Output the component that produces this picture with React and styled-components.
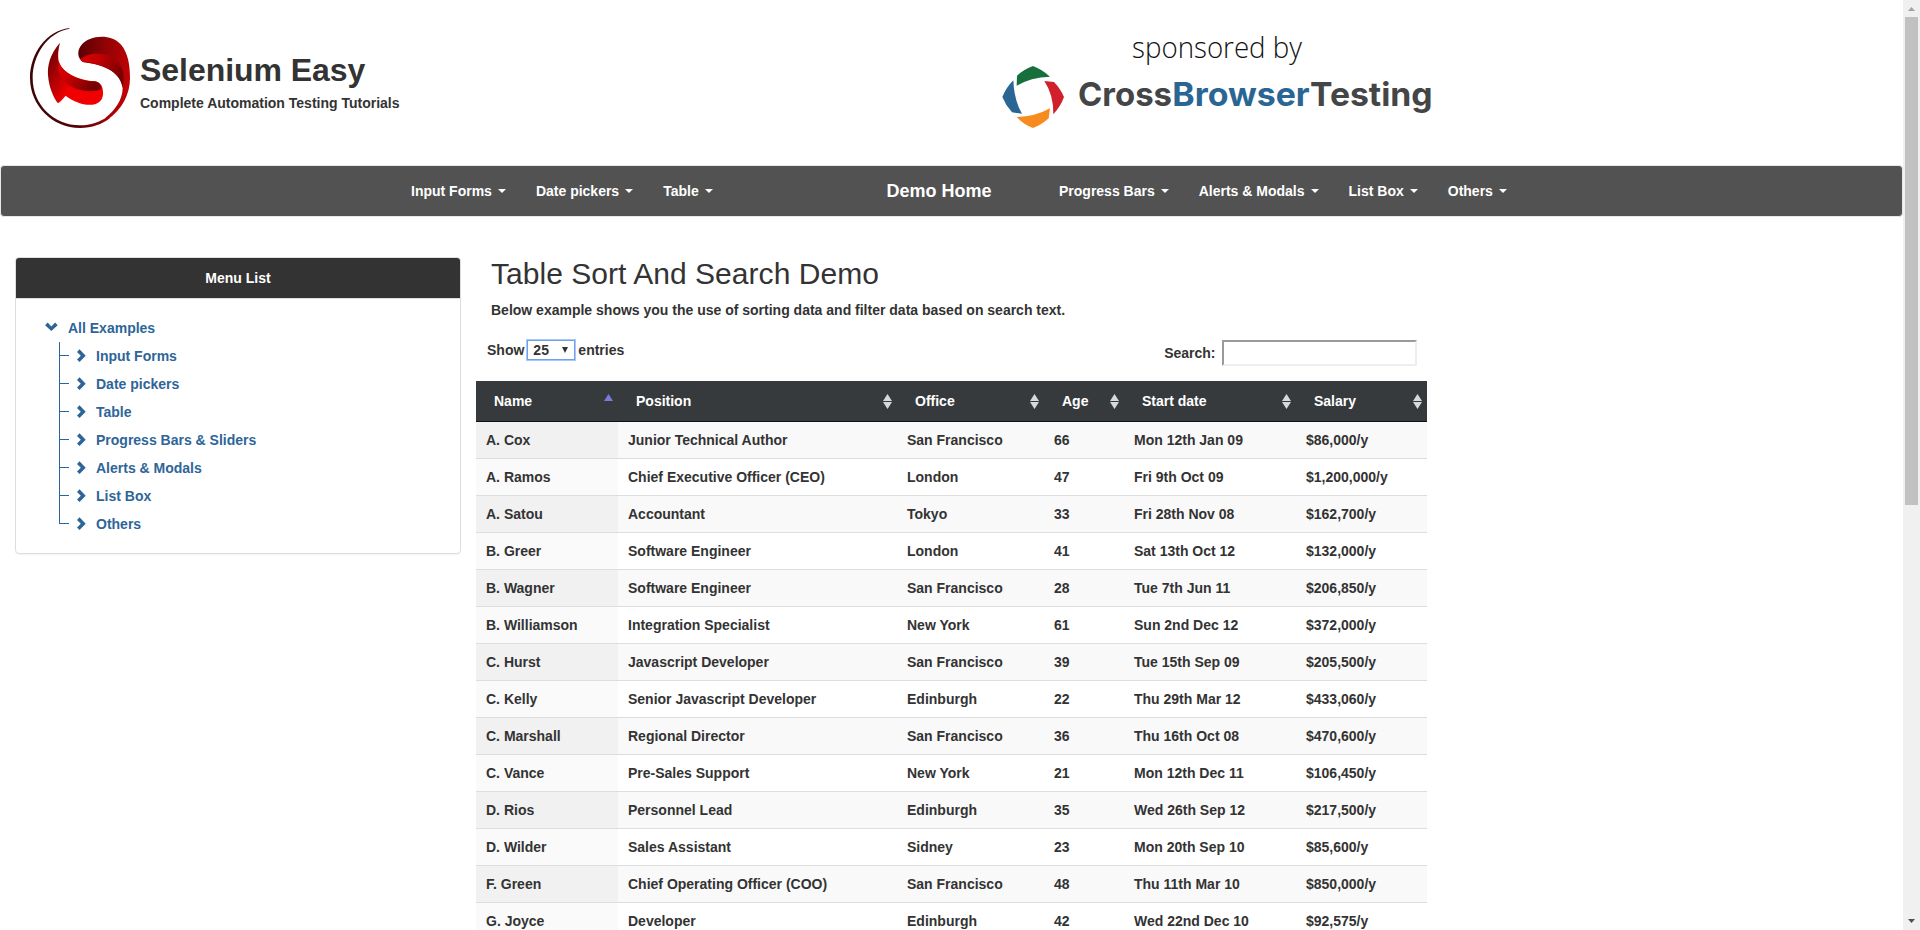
import React from 'react';
import styled, { createGlobalStyle, css } from 'styled-components';

const GlobalStyle = createGlobalStyle`
  *, *::before, *::after { box-sizing: border-box; }
  html, body { margin: 0; height: 930px; overflow: hidden; background: #fff; }
  body {
    font: bold 14px/20px "Liberation Sans", Arial, sans-serif;
    color: #333;
  }
`;

const Shell = styled.div`
  display: grid;
  grid-template-columns: 1903px 17px;
  height: 930px;
  overflow: hidden;
`;

const Page = styled.div`
  height: 930px;
  overflow: hidden;
`;

/* ---------- header ---------- */

const Header = styled.header`
  display: grid;
  grid-template-columns: 972px auto;
  height: 165px;
  padding: 0 0 0 30px;
`;

const Brand = styled.div`
  display: flex;
  align-items: flex-start;
  gap: 10px;
  padding-top: 28px;
`;

const BrandText = styled.div`
  padding-top: 25px;
`;

const BrandName = styled.h1`
  margin: 0 0 5px;
  font-size: 32px;
  line-height: 35px;
  letter-spacing: -0.05px;
`;

const Tagline = styled.div`
  white-space: nowrap;
`;

const Sponsor = styled.div`
  padding-top: 16px;
  svg { display: block; }
`;

/* ---------- navigation ---------- */

const NavBar = styled.nav`
  display: grid;
  grid-template-columns: 475px 173px auto;
  height: 52px;
  padding-left: 395px;
  border: 1px solid #e7e7e7;
  border-radius: 4px;
  background: #525252;
  color: #fff;
`;

const NavGroup = styled.ul`
  display: flex;
  margin: 0;
  padding: 0;
  list-style: none;
`;

const NavItem = styled.li`
  display: flex;
  align-items: center;
  gap: 6px;
  padding: 0 15px;
  white-space: nowrap;
`;

const Caret = styled.span`
  border: 4px solid transparent;
  border-top-color: #fff;
  border-bottom: 0;
`;

const NavHome = styled.a`
  padding: 15px 15px 15px 15.5px;
  font-size: 18px;
`;

/* ---------- body columns ---------- */

const Columns = styled.div`
  display: flex;
  align-items: flex-start;
  padding-top: 40px;
`;

const SideColumn = styled.aside`
  width: 476px;
  padding: 0 15px;
`;

const Panel = styled.section`
  border: 1px solid #ddd;
  border-radius: 4px;
  box-shadow: 0 1px 1px rgba(0, 0, 0, 0.05);
  overflow: hidden;
`;

const PanelHeading = styled.div`
  padding: 10px 15px;
  border-bottom: 1px solid #ddd;
  background: #333;
  color: #fff;
  text-align: center;
`;

const Tree = styled.ul`
  margin: 0;
  padding: 15px 0 15px 28px;
  list-style: none;
  color: #2e6599;
`;

const TreeRow = styled.li`
  display: flex;
  align-items: center;
  height: 28px;
  ${(p) => p.$root ? css`padding-left: 1px; gap: 9px;` : css`padding-left: 15px; gap: 8px;`}
`;

const Branch = styled.span`
  align-self: stretch;
  width: 10px;
  ${(p) => !p.$last && css`border-left: 1px solid #2e6599;`}
  &::before {
    content: '';
    display: block;
    height: 14px;
    border-bottom: 1px solid #2e6599;
    ${(p) => p.$last && css`border-left: 1px solid #2e6599;`}
  }
`;

const TreeLabel = styled.span`
  padding-left: ${(p) => (p.$root ? 0 : 1)}px;
`;

/* ---------- table ---------- */

const MainColumn = styled.main`
  width: 951px;
`;

const Title = styled.h2`
  margin: 0 0 10px 15px;
  font-size: 30px;
  font-weight: 400;
  line-height: 33px;
  letter-spacing: 0.04px;
`;

const Intro = styled.p`
  margin: 0 0 20px 15px;
`;

const Controls = styled.div`
  display: flex;
  justify-content: space-between;
  align-items: flex-start;
  height: 41px;
  padding: 0 10px 0 11px;
`;

const LengthControl = styled.label`
  display: flex;
  gap: 3px;
`;

const LengthSelect = styled.span`
  display: flex;
  align-items: center;
  justify-content: space-between;
  width: 48px;
  height: 20px;
  padding: 0 6px 0 5px;
  border: 1px solid #6f9ff0;
  box-shadow: 0 0 0 1px #a9c7f7;
  background: #fff;
`;

const FilterControl = styled.label`
  display: flex;
  align-items: center;
  gap: 6.5px;
`;

const FilterInput = styled.input`
  width: 195px;
  height: 26px;
  border: 2px solid;
  border-color: #9a9a9a #eee #eee #9a9a9a;
  background: #fff;
`;

const Table = styled.table`
  width: 951px;
  table-layout: fixed;
  border-collapse: separate;
  border-spacing: 0;
`;

const HeadCell = styled.th`
  width: ${(p) => p.$w}px;
  height: 41px;
  padding: 0 5px 0 18px;
  border-bottom: 1px solid #111;
  background: #363a3d;
  color: #fff;
  text-align: left;
`;

const HeadInner = styled.div`
  display: flex;
  align-items: center;
  justify-content: space-between;
`;

const Cell = styled.td`
  padding: 8px 10px;
  border-top: 1px solid #ddd;
  white-space: nowrap;
`;

const Row = styled.tr`
  background: #fff;
  & > td:first-child { background: #fafafa; }
  &:nth-child(odd) { background: #f9f9f9; }
  &:nth-child(odd) > td:first-child { background: #f1f1f1; }
  &:first-child > td { border-top: 0; }
`;

/* ---------- scrollbar ---------- */

const ScrollTrack = styled.div`
  display: flex;
  flex-direction: column;
  align-items: center;
  justify-content: space-between;
  height: 930px;
  background: #f0f0f0;
`;

const ScrollUpper = styled.div`
  display: flex;
  flex-direction: column;
  align-items: center;
`;

const ScrollArrow = styled.svg`
  display: block;
  width: 17px;
  height: 17px;
`;

const ScrollThumb = styled.div`
  width: 13px;
  height: 488px;
  background: #c1c1c1;
`;

const SeleniumLogo = () => (
  <svg width="100" height="100" viewBox="90 84 300 300">
    <defs>
      <linearGradient id="ring" x1="0" y1="0" x2="1" y2="0">
        <stop offset="0" stopColor="#3c0506" />
        <stop offset=".6" stopColor="#560204" />
        <stop offset="1" stopColor="#a50205" />
      </linearGradient>
      <linearGradient id="top" x1="0" y1=".2" x2="1" y2=".45">
        <stop offset="0" stopColor="#5c0002" />
        <stop offset=".5" stopColor="#930306" />
        <stop offset="1" stopColor="#c00206" />
      </linearGradient>
      <linearGradient id="fold" x1="0" y1="0" x2="1" y2=".5">
        <stop offset="0" stopColor="#e00003" />
        <stop offset=".45" stopColor="#bc0003" />
        <stop offset="1" stopColor="#780003" />
      </linearGradient>
      <linearGradient id="low" x1="0" y1="0" x2="1" y2=".6">
        <stop offset="0" stopColor="#5c0002" />
        <stop offset=".38" stopColor="#b50104" />
        <stop offset=".6" stopColor="#f00000" />
        <stop offset="1" stopColor="#f00000" />
      </linearGradient>
      <linearGradient id="lowfold" x1="0" y1="0" x2="1" y2=".5">
        <stop offset="0" stopColor="#e80003" />
        <stop offset=".4" stopColor="#c80003" />
        <stop offset="1" stopColor="#750003" />
      </linearGradient>
    </defs>
    <path fill="url(#ring)" d="M208 84C140 92 90 160 90 234C90 316 157 384 240 384C277 384 306 373 329 355L322 350C300 366 272 376 240 376C162 376 98 315 98 234C98 165 142 98 208 86Z" />
    <path fill="url(#top)" d="M248 186C232 172 230 152 245 134C266 108 330 98 362 133C384 158 390 195 390 234C390 282 366 330 322 359L315 355C346 330 368 298 368 264C364 220 320 195 248 186Z" />
    <path fill="url(#fold)" d="M242 178C262 157 312 155 344 177C362 190 372 212 371 240L368 264C362 222 320 192 248 186Z" />
    <path fill="url(#low)" d="M180 128C150 162 142 196 144 226C147 262 160 293 174 310C183 304 190 294 197 287C220 305 249 316 277 314C300 311 311 296 309 275C308 253 296 244 280 244C229 239 190 218 178 190C171 170 176 144 180 128Z" />
    <path fill="url(#lowfold)" d="M176 183C189 223 238 243 285 244C299 247 305 258 303 268C280 280 225 273 196 248C180 232 173 205 176 183Z" />
  </svg>
);

const SponsorLogo = () => (
  <svg width="440" height="124" viewBox="66 48 1320 372">
    <text x="456" y="173" fontFamily="Open Sans, sans-serif" fontWeight="300" fontSize="86" fill="#111" textLength="510" lengthAdjust="spacingAndGlyphs">sponsored by</text>
    <path fill="#176f3b" d="M159 198Q186 208 210 230Q152 232 110 257L111 227Q133 207 159 198Z" />
    <path fill="#cf202b" d="M193 243L222 246Q242 267 252 291Q242 319 220 343Q221 285 193 243Z" />
    <path fill="#f78b20" d="M210 325L206 355Q186 374 159 384Q131 374 110 351Q166 350 210 325Z" />
    <path fill="#296693" d="M100 241Q102 300 126 341L96 337Q77 316 67 291Q78 263 100 241Z" />
    <g fontFamily="Inter, sans-serif" fontWeight="700" fontSize="100">
      <text x="294" y="318" fill="#444547" textLength="282" lengthAdjust="spacingAndGlyphs">Cross</text>
      <text x="577" y="318" fill="#296693" textLength="412" lengthAdjust="spacingAndGlyphs">Browser</text>
      <text x="990" y="318" fill="#444547" textLength="368" lengthAdjust="spacingAndGlyphs">Testing</text>
    </g>
  </svg>
);

const ChevronDown = () => (
  <svg width="14" height="12" viewBox="0.7 0.8 14 12">
    <path fill="#2e6599" d="M.8 4L3.4 1.4L7 5.2L10.8 1.4L13.4 4L7 9.9Z" />
  </svg>
);

const ChevronRight = () => (
  <svg width="10" height="14" viewBox="0.5 0.3 10 14">
    <path fill="#2e6599" d="M.5 3.2L3 .6L9.2 7L3 13.2L.5 10.8L4.3 7Z" />
  </svg>
);

const SortIcon = ({ active }) => (
  <svg width="9" height="15" viewBox="0 0 9 15">
    <path fill={active ? '#7a7ade' : '#d8d8d8'} d="M4.5 0L9 7H0Z" />
    {!active && <path fill="#d8d8d8" d="M0 8H9L4.5 15Z" />}
  </svg>
);

const leftNav = ['Input Forms', 'Date pickers', 'Table'];
const rightNav = ['Progress Bars', 'Alerts & Modals', 'List Box', 'Others'];
const tree = ['Input Forms', 'Date pickers', 'Table', 'Progress Bars & Sliders', 'Alerts & Modals', 'List Box', 'Others'];

const columns = [
  ['Name', 142],
  ['Position', 279],
  ['Office', 147],
  ['Age', 80],
  ['Start date', 172],
  ['Salary', 131],
];

const rows = [
  ['A. Cox', 'Junior Technical Author', 'San Francisco', '66', 'Mon 12th Jan 09', '$86,000/y'],
  ['A. Ramos', 'Chief Executive Officer (CEO)', 'London', '47', 'Fri 9th Oct 09', '$1,200,000/y'],
  ['A. Satou', 'Accountant', 'Tokyo', '33', 'Fri 28th Nov 08', '$162,700/y'],
  ['B. Greer', 'Software Engineer', 'London', '41', 'Sat 13th Oct 12', '$132,000/y'],
  ['B. Wagner', 'Software Engineer', 'San Francisco', '28', 'Tue 7th Jun 11', '$206,850/y'],
  ['B. Williamson', 'Integration Specialist', 'New York', '61', 'Sun 2nd Dec 12', '$372,000/y'],
  ['C. Hurst', 'Javascript Developer', 'San Francisco', '39', 'Tue 15th Sep 09', '$205,500/y'],
  ['C. Kelly', 'Senior Javascript Developer', 'Edinburgh', '22', 'Thu 29th Mar 12', '$433,060/y'],
  ['C. Marshall', 'Regional Director', 'San Francisco', '36', 'Thu 16th Oct 08', '$470,600/y'],
  ['C. Vance', 'Pre-Sales Support', 'New York', '21', 'Mon 12th Dec 11', '$106,450/y'],
  ['D. Rios', 'Personnel Lead', 'Edinburgh', '35', 'Wed 26th Sep 12', '$217,500/y'],
  ['D. Wilder', 'Sales Assistant', 'Sidney', '23', 'Mon 20th Sep 10', '$85,600/y'],
  ['F. Green', 'Chief Operating Officer (COO)', 'San Francisco', '48', 'Thu 11th Mar 10', '$850,000/y'],
  ['G. Joyce', 'Developer', 'Edinburgh', '42', 'Wed 22nd Dec 10', '$92,575/y'],
];

const NavMenu = ({ items }) => (
  <NavGroup>
    {items.map((item) => (
      <NavItem key={item}>{item}<Caret /></NavItem>
    ))}
  </NavGroup>
);

export default function App() {
  return (
    <>
      <GlobalStyle />
      <Shell>
        <Page>
          <Header>
            <Brand>
              <SeleniumLogo />
              <BrandText>
                <BrandName>Selenium Easy</BrandName>
                <Tagline>Complete Automation Testing Tutorials</Tagline>
              </BrandText>
            </Brand>
            <Sponsor><SponsorLogo /></Sponsor>
          </Header>
          <NavBar>
            <NavMenu items={leftNav} />
            <NavHome>Demo Home</NavHome>
            <NavMenu items={rightNav} />
          </NavBar>
          <Columns>
            <SideColumn>
              <Panel>
                <PanelHeading>Menu List</PanelHeading>
                <Tree>
                  <TreeRow $root>
                    <ChevronDown />
                    <TreeLabel $root>All Examples</TreeLabel>
                  </TreeRow>
                  {tree.map((item, i) => (
                    <TreeRow key={item}>
                      <Branch $last={i === tree.length - 1} />
                      <ChevronRight />
                      <TreeLabel>{item}</TreeLabel>
                    </TreeRow>
                  ))}
                </Tree>
              </Panel>
            </SideColumn>
            <MainColumn>
              <Title>Table Sort And Search Demo</Title>
              <Intro>Below example shows you the use of sorting data and filter data based on search text.</Intro>
              <Controls>
                <LengthControl>
                  Show
                  <LengthSelect>
                    25
                    <svg width="6" height="6" viewBox="0 0 6 6"><path fill="#333" d="M0 0H6L3 6Z" /></svg>
                  </LengthSelect>
                  entries
                </LengthControl>
                <FilterControl>
                  Search:
                  <FilterInput type="search" />
                </FilterControl>
              </Controls>
              <Table>
                <thead>
                  <tr>
                    {columns.map(([label, width], i) => (
                      <HeadCell key={label} $w={width}>
                        <HeadInner>{label}<SortIcon active={i === 0} /></HeadInner>
                      </HeadCell>
                    ))}
                  </tr>
                </thead>
                <tbody>
                  {rows.map((row) => (
                    <Row key={row[0]}>
                      {row.map((value, i) => <Cell key={i}>{value}</Cell>)}
                    </Row>
                  ))}
                </tbody>
              </Table>
            </MainColumn>
          </Columns>
        </Page>
        <ScrollTrack>
          <ScrollUpper>
            <ScrollArrow viewBox="0 0 17 17"><path fill="#a3a3a3" d="M5 11L8.5 7L12 11Z" /></ScrollArrow>
            <ScrollThumb />
          </ScrollUpper>
          <ScrollArrow viewBox="0 0 17 17"><path fill="#505050" d="M5 6H12L8.5 10Z" /></ScrollArrow>
        </ScrollTrack>
      </Shell>
    </>
  );
}
